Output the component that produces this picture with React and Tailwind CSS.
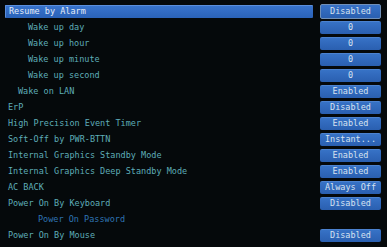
import React from 'react';

// BIOS power-management list: label on the left, value button on the right
const rows = [
  { label: 'Resume by Alarm', indent: 0, value: 'Disabled', selected: true },
  { label: 'Wake up day', indent: 2, value: '0' },
  { label: 'Wake up hour', indent: 2, value: '0' },
  { label: 'Wake up minute', indent: 2, value: '0' },
  { label: 'Wake up second', indent: 2, value: '0' },
  { label: 'Wake on LAN', indent: 1, value: 'Enabled' },
  { label: 'ErP', indent: 0, value: 'Disabled' },
  { label: 'High Precision Event Timer', indent: 0, value: 'Enabled' },
  { label: 'Soft-Off by PWR-BTTN', indent: 0, value: 'Instant...' },
  { label: 'Internal Graphics Standby Mode', indent: 0, value: 'Enabled' },
  { label: 'Internal Graphics Deep Standby Mode', indent: 0, value: 'Enabled' },
  { label: 'AC BACK', indent: 0, value: 'Always Off' },
  { label: 'Power On By Keyboard', indent: 0, value: 'Disabled' },
  { label: 'Power On Password', indent: 3, value: null, dim: true },
  { label: 'Power On By Mouse', indent: 0, value: 'Disabled' },
];

const indentClass = ['pl-[3px]', 'pl-[13px]', 'pl-[23px]', 'pl-[33px]'];

const Row = ({ label, indent, value, selected, dim }) => (
  <div className="flex h-4 items-center">
    <div
      className={`ml-[5px] mr-[7px] flex h-[13px] flex-1 items-center ${indentClass[indent]} ${
        selected
          ? 'rounded-[1px] border-t border-l border-[#5b8fdc] bg-gradient-to-b from-[#3873cc] to-[#2a62b8] text-[#e4ecf6]'
          : dim
          ? 'text-[#2f74b4]'
          : 'text-[#5eadb8]'
      }`}
    >
      {label}
    </div>
    {value ? (
      <div
        className={`flex w-[61px] items-center justify-center rounded-[2px] bg-gradient-to-b from-[#3772c6] to-[#2a5fb0] text-[#d6e2f0] ${
          selected
            ? 'h-[15px] border border-[#7090b8]'
            : 'h-[13px] border-t border-[#4b82d0]'
        }`}
      >
        {value}
      </div>
    ) : (
      <div className="w-[61px]"></div>
    )}
  </div>
);

export default function App() {
  return (
    <div
      className="h-[247px] w-[387px] overflow-hidden bg-[#05090b] pt-[3px] pr-[6px] text-[8.5px] leading-none"
      style={{ fontFamily: '"DejaVu Sans Mono", "Liberation Mono", monospace' }}
    >
      {rows.map((r) => (
        <Row key={r.label} {...r} />
      ))}
    </div>
  );
}
